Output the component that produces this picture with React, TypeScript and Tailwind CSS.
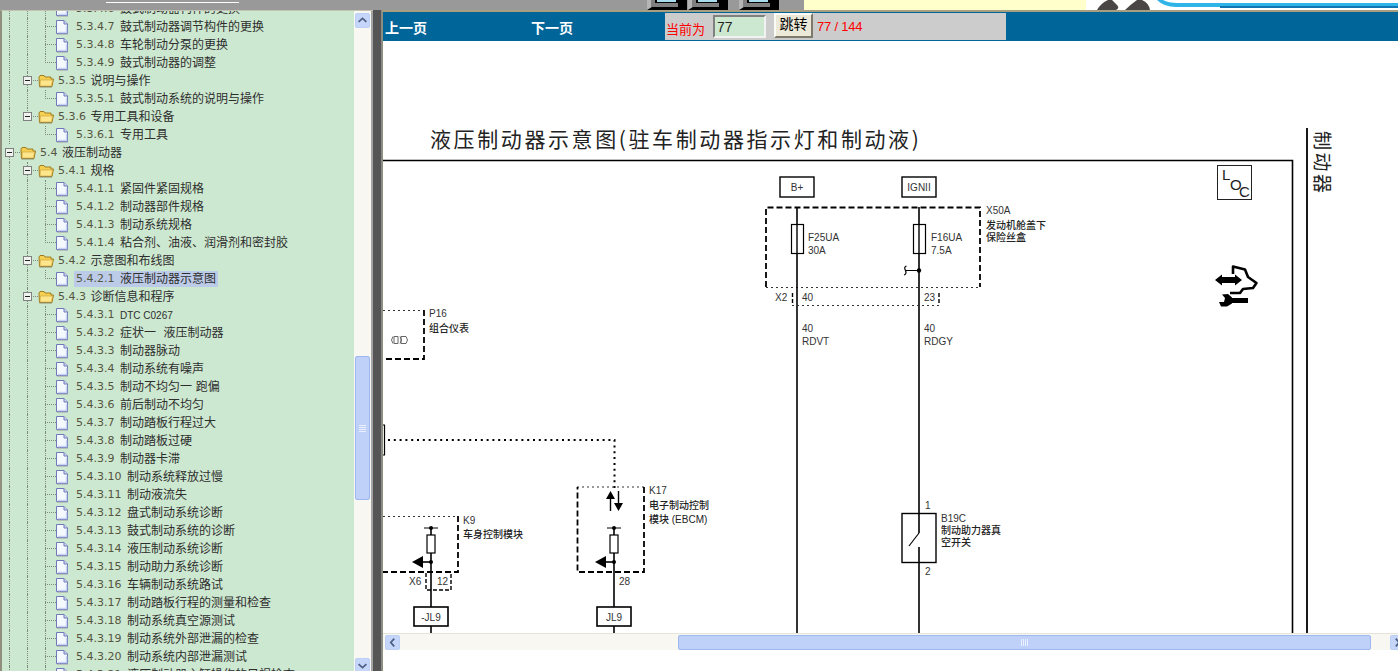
const CJK = "font-['DejaVu_Sans','Noto_Sans_CJK_SC',sans-serif]";

type Row = {
  num: string;
  label: string;
  kind: "root" | "folder" | "leaf";
  last?: boolean; // last child in its folder
  endOfBranch?: boolean; // middle guide stops here
  selected?: boolean;
  latin?: boolean;
};

const leaf = (num: string, label: string, last = false): Row => ({ num, label, kind: "leaf", last });
const folder = (num: string, label: string): Row => ({ num, label, kind: "folder" });

const ROWS: Row[] = [
  leaf("5.3.4.6", "鼓式制动器构件的更换"),
  leaf("5.3.4.7", "鼓式制动器调节构件的更换"),
  leaf("5.3.4.8", "车轮制动分泵的更换"),
  leaf("5.3.4.9", "鼓式制动器的调整", true),
  folder("5.3.5", "说明与操作"),
  leaf("5.3.5.1", "鼓式制动系统的说明与操作", true),
  { ...folder("5.3.6", "专用工具和设备"), last: true },
  { ...leaf("5.3.6.1", "专用工具", true), endOfBranch: true },
  { num: "5.4", label: "液压制动器", kind: "root" },
  folder("5.4.1", "规格"),
  leaf("5.4.1.1", "紧固件紧固规格"),
  leaf("5.4.1.2", "制动器部件规格"),
  leaf("5.4.1.3", "制动系统规格"),
  leaf("5.4.1.4", "粘合剂、油液、润滑剂和密封胶", true),
  folder("5.4.2", "示意图和布线图"),
  { ...leaf("5.4.2.1", "液压制动器示意图", true), selected: true },
  folder("5.4.3", "诊断信息和程序"),
  { ...leaf("5.4.3.1", "DTC C0267"), latin: true },
  leaf("5.4.3.2", "症状一  液压制动器"),
  leaf("5.4.3.3", "制动器脉动"),
  leaf("5.4.3.4", "制动系统有噪声"),
  leaf("5.4.3.5", "制动不均匀一 跑偏"),
  leaf("5.4.3.6", "前后制动不均匀"),
  leaf("5.4.3.7", "制动踏板行程过大"),
  leaf("5.4.3.8", "制动踏板过硬"),
  leaf("5.4.3.9", "制动器卡滞"),
  leaf("5.4.3.10", "制动系统释放过慢"),
  leaf("5.4.3.11", "制动液流失"),
  leaf("5.4.3.12", "盘式制动系统诊断"),
  leaf("5.4.3.13", "鼓式制动系统的诊断"),
  leaf("5.4.3.14", "液压制动系统诊断"),
  leaf("5.4.3.15", "制动助力系统诊断"),
  leaf("5.4.3.16", "车辆制动系统路试"),
  leaf("5.4.3.17", "制动踏板行程的测量和检查"),
  leaf("5.4.3.18", "制动系统真空源测试"),
  leaf("5.4.3.19", "制动系统外部泄漏的检查"),
  leaf("5.4.3.20", "制动系统内部泄漏测试"),
  leaf("5.4.3.21", "液压制动器主缸操作的目视检查"),
];

function Guide({ kind }: { kind: "line" | "none" | "elbow" | "tee" | "box" | "boxEnd" | "boxTop" }) {
  return (
    <span className="relative block h-full w-[18px] shrink-0">
      {(kind === "line" || kind === "tee" || kind === "box") && (
        <span className="absolute inset-y-0 left-[9px] border-l border-dotted border-[#7d8a7d]" />
      )}
      {(kind === "elbow" || kind === "boxEnd") && (
        <span className="absolute left-[9px] top-0 h-[9px] border-l border-dotted border-[#7d8a7d]" />
      )}
      {kind === "boxTop" && (
        <span className="absolute bottom-0 left-[9px] h-[9px] border-l border-dotted border-[#7d8a7d]" />
      )}
      {(kind === "elbow" || kind === "tee") && (
        <span className="absolute left-[9px] top-[8px] w-[11px] border-t border-dotted border-[#7d8a7d]" />
      )}
      {(kind === "box" || kind === "boxEnd" || kind === "boxTop") && (
        <>
          <span className="absolute left-[13px] top-[8px] w-[7px] border-t border-dotted border-[#7d8a7d]" />
          <span className="absolute left-[5px] top-[4px] flex h-[9px] w-[9px] items-center justify-center border border-[#808080] bg-[#eef3ee]">
            <span className="h-px w-[5px] bg-[#222]" />
          </span>
        </>
      )}
    </span>
  );
}

function FolderIcon() {
  return (
    <svg width="16" height="14" viewBox="0 0 16 14" className="ml-[2px] mr-[-1px] shrink-0">
      <path d="M1 3 L2 1.5 H6 L7 3 H13 V5 H15.5 L14 12.5 H1.5 Z" fill="#f5cf52" stroke="#a07c20" strokeWidth="1" />
      <path d="M2.5 6 H14.5 L13.5 12 H2 Z" fill="#fde68c" stroke="#c9a13a" strokeWidth="0.6" />
      <path d="M1.5 13 H14" stroke="#8c8c6a" strokeWidth="1" />
    </svg>
  );
}

function DocIcon() {
  return (
    <svg width="12" height="15" viewBox="0 0 12 15" className="ml-[2px] shrink-0">
      <path d="M0.5 0.5 H8 L11.5 4 V13.5 H0.5 Z" fill="#f4f8ff" stroke="#6f78b8" strokeWidth="1" />
      <path d="M8 0.5 V4 H11.5" fill="#cdd8f4" stroke="#6f78b8" strokeWidth="1" />
      <path d="M2 12.5 H10.5 V6" fill="none" stroke="#c6d3f2" strokeWidth="1.4" />
      <path d="M1 14.5 H12" stroke="#b8c0b8" strokeWidth="1" />
    </svg>
  );
}

function TreeRow({ row }: { row: Row }) {
  const cells =
    row.kind === "root" ? (
      <Guide kind="boxTop" />
    ) : row.kind === "folder" ? (
      <>
        <Guide kind="line" />
        <Guide kind={row.last ? "boxEnd" : "box"} />
      </>
    ) : (
      <>
        <Guide kind="line" />
        <Guide kind={row.endOfBranch ? "none" : "line"} />
        <Guide kind={row.last ? "elbow" : "tee"} />
      </>
    );

  return (
    <div className="flex h-[18px] items-center whitespace-pre">
      {cells}
      {row.kind === "leaf" ? <DocIcon /> : <FolderIcon />}
      <span
        className={`flex h-4 items-center px-0.5 ${row.kind === "leaf" ? "ml-1.5" : "ml-[3px]"} ${
          row.selected ? "bg-[#bccbe8]" : ""
        }`}
      >
        <span className="text-[11px] text-[#55553f]">{row.num} </span>
        <span
          className={`${row.kind === "leaf" ? "ml-0.5" : "ml-px"} ${
            row.latin ? "font-['Liberation_Sans',sans-serif] text-[10px]" : "text-xs"
          } text-[#2e2e2e]`}
        >
          {row.label}
        </span>
      </span>
    </div>
  );
}

function ScrollArrow({ dir }: { dir: "up" | "down" | "left" | "right" }) {
  const d = {
    up: "M3 9 L7.5 5 L12 9",
    down: "M3 6 L7.5 10 L12 6",
    left: "M9.5 3 L5.5 7.5 L9.5 12",
    right: "M5.5 3 L9.5 7.5 L5.5 12",
  }[dir];
  return (
    <span className="flex h-[15px] w-[15px] shrink-0 items-center justify-center rounded-[2px] border border-[#bcd0f5] bg-[#c5d6fa]">
      <svg width="15" height="15" viewBox="0 0 15 15">
        <path d={d} fill="none" stroke="#4d6185" strokeWidth="2" />
      </svg>
    </span>
  );
}

function TreePanel() {
  return (
    <aside className="flex h-full w-[373px] shrink-0 border-l-2 border-t border-[#8f8f7d] border-t-[#c4c4b4] bg-[#cde8d0]">
      <div className={`min-w-0 flex-1 overflow-hidden ${CJK}`}>
        <div className="-ml-0.5 -mt-[11px]">
          {ROWS.map((row) => (
            <TreeRow key={row.num} row={row} />
          ))}
        </div>
      </div>
      <div className="flex w-[19px] shrink-0 border-r-2 border-[#a3a3a3] bg-[#f8f7f2]">
        <div className="flex w-full flex-col items-center pt-0.5">
          <ScrollArrow dir="up" />
          <div className="mt-[328px] flex h-[144px] w-[15px] shrink-0 flex-col items-center justify-center gap-px rounded-[2px] border border-[#9db8f1] bg-[#bfd0f9]">
            <span className="h-px w-[7px] bg-[#eaf0ff]" />
            <span className="h-px w-[7px] bg-[#eaf0ff]" />
            <span className="h-px w-[7px] bg-[#eaf0ff]" />
            <span className="h-px w-[7px] bg-[#eaf0ff]" />
          </div>
          <div className="mt-[158px]">
            <ScrollArrow dir="down" />
          </div>
        </div>
      </div>
    </aside>
  );
}

function PageBar() {
  return (
    <div className="flex h-[29px] shrink-0 items-stretch bg-[#006699] py-px pl-[2px] font-['Noto_Sans_CJK_SC',sans-serif]">
      <a className="flex w-[146px] items-center text-sm font-bold text-white">上一页</a>
      <a className="flex w-[134px] items-center text-sm font-bold text-white">下一页</a>
      <div className="flex w-[341px] items-center bg-[#cccccc] pl-px">
        <span className="mt-[5px] w-[47px] text-[13px] text-[#ff0000]">当前为</span>
        <input
          readOnly
          value="77"
          className="h-[23px] w-[53px] border-2 border-[#f2f2f2] border-l-[#808080] border-t-[#808080] bg-[#cde8d0] px-0.5 font-['Liberation_Sans',sans-serif] text-sm text-[#222]"
        />
        <button className="mb-0.5 ml-2 h-[25px] w-[39px] border-2 border-[#fbfaf4] border-b-[#7d7a6b] border-r-[#7d7a6b] bg-[#ece9d8] pb-1.5 text-sm leading-none text-black">
          跳转
        </button>
        <span className="ml-1 font-['Liberation_Sans',sans-serif] text-[13px] tracking-[-0.2px] text-[#ff0000]">
          77 / 144
        </span>
      </div>
    </div>
  );
}

const LABEL = "fill-[#333] font-['Liberation_Sans','Noto_Sans_CJK_SC',sans-serif] text-[10px]";
const NOTE = "fill-[#222] font-['Liberation_Sans','Noto_Sans_CJK_SC',sans-serif] text-[10px] font-medium";
const LOC = "fill-[#222] font-['Liberation_Sans',sans-serif] text-[15px]";

function ControlModule({ x, tag }: { x: number; tag: string }) {
  return (
    <g>
      <path d={`M${x} 528 V633`} stroke="#000" strokeWidth="1.6" fill="none" />
      <path d={`M${x - 7} 528 H${x + 7}`} stroke="#000" strokeWidth="1" />
      <circle cx={x} cy="528" r="2" fill="#000" />
      <rect x={x - 4} y="535" width="8" height="18" fill="#fff" stroke="#000" strokeWidth="1.2" />
      <circle cx={x} cy="562" r="2" fill="#000" />
      <path d={`M${x - 19} 562 L${x - 8} 556 V568 Z`} fill="#000" />
      <path d={`M${x - 8} 562 H${x}`} stroke="#000" strokeWidth="1.6" />
      <rect x={x - 17} y="607" width="34" height="19" fill="#fff" stroke="#000" strokeWidth="1.6" />
      <text x={x} y="620.5" textAnchor="middle" className={LABEL}>
        {tag}
      </text>
    </g>
  );
}

function Diagram() {
  return (
    <svg viewBox="383 41 1015 592" className="block h-[592px] w-[1015px] shrink-0">
      <text
        x="430"
        y="147"
        className="fill-[#222] font-['Noto_Sans_CJK_SC',sans-serif] text-[21px]"
        letterSpacing="2.6"
      >
        液压制动器示意图(驻车制动器指示灯和制动液)
      </text>
      <path d="M383 160.5 H1292.5 V633" fill="none" stroke="#000" strokeWidth="1.6" />
      <path d="M1307 128 V633" fill="none" stroke="#000" strokeWidth="1.8" />
      <text
        transform="translate(1315 131) rotate(90)"
        className="fill-[#222] font-['Noto_Sans_CJK_SC',sans-serif] text-[19px]"
        letterSpacing="2.5"
      >
        制动器
      </text>

      {/* LOC */}
      <rect x="1217.5" y="165.5" width="34" height="34" fill="none" stroke="#222" />
      <text x="1222" y="180" className={LOC}>L</text>
      <text x="1230" y="190" className={LOC}>O</text>
      <text x="1239" y="197" className={LOC}>C</text>

      {/* service icon */}
      <path
        d="M1233 274 V266.5 L1245 269.5 L1248 277 L1256.5 283 L1253 288 L1243 289 L1240 293 H1230"
        fill="none"
        stroke="#000"
        strokeWidth="2.6"
        strokeLinejoin="round"
      />
      <path d="M1215 280 L1222 274.5 V277 H1235 V274.5 L1242 280 L1235 285.5 V283 H1222 V285.5 Z" fill="#000" />
      <path d="M1228 300.5 H1248" stroke="#000" strokeWidth="5" />
      <path d="M1222 294.5 L1228 294 L1232 297.5 V303.5 L1227 306.5 L1221 306.5 L1219 302 L1224 302 L1225 298 Z" fill="#000" />

      {/* fuse block */}
      <rect x="780" y="177" width="34" height="20" fill="#fff" stroke="#000" strokeWidth="1.4" />
      <rect x="902" y="177" width="34" height="20" fill="#fff" stroke="#000" strokeWidth="1.4" />
      <text x="797" y="191" textAnchor="middle" className={LABEL}>B+</text>
      <text x="919" y="191" textAnchor="middle" className={LABEL}>IGNII</text>
      <path d="M766 287 V207.5 H980 V287" fill="none" stroke="#000" strokeWidth="1.8" strokeDasharray="6 3" />
      <path d="M766 287.5 H980" fill="none" stroke="#333" strokeWidth="1" strokeDasharray="2 3" />
      <path d="M797 207 V633" stroke="#000" strokeWidth="1.6" />
      <path d="M919 207 V533 M919 547 V633" stroke="#000" strokeWidth="1.6" fill="none" />
      <rect x="791.5" y="224.5" width="12" height="29" fill="#fff" stroke="#000" strokeWidth="1.2" />
      <rect x="913.5" y="224.5" width="12" height="29" fill="#fff" stroke="#000" strokeWidth="1.2" />
      <path d="M797 224 V254 M919 224 V254" stroke="#000" strokeWidth="1.4" />
      <path d="M919 270.5 H906 M906.5 266 Q903.5 267 905.5 270.5 Q907 274 904 275" stroke="#000" strokeWidth="1.2" fill="none" />
      <circle cx="919" cy="270.5" r="2.2" fill="#000" />
      <text x="808" y="241" className={LABEL}>F25UA</text>
      <text x="808" y="254" className={LABEL}>30A</text>
      <text x="931" y="241" className={LABEL}>F16UA</text>
      <text x="931" y="254" className={LABEL}>7.5A</text>
      <text x="986" y="214" className={LABEL}>X50A</text>
      <text x="986" y="229" className={NOTE}>发动机舱盖下</text>
      <text x="986" y="241" className={NOTE}>保险丝盒</text>

      <text x="775" y="301" className={LABEL}>X2</text>
      <path d="M792.5 293 V305" stroke="#000" strokeWidth="1.4" strokeDasharray="4 2" />
      <path d="M792 305.5 H939" stroke="#333" strokeWidth="1" strokeDasharray="2 3" />
      <path d="M939 293 V305" stroke="#000" strokeWidth="1.4" strokeDasharray="4 2" />
      <text x="802" y="301" className={LABEL}>40</text>
      <text x="924" y="301" className={LABEL}>23</text>
      <text x="802" y="332" className={LABEL}>40</text>
      <text x="802" y="345" className={LABEL}>RDVT</text>
      <text x="924" y="332" className={LABEL}>40</text>
      <text x="924" y="345" className={LABEL}>RDGY</text>

      {/* P16 */}
      <path d="M383 310.5 H424" stroke="#333" strokeWidth="1" strokeDasharray="2 3" />
      <path d="M424 310 V359 H383" fill="none" stroke="#000" strokeWidth="1.8" strokeDasharray="6 3" />
      <text x="429" y="317" className={LABEL}>P16</text>
      <text x="429" y="332" className={NOTE}>组合仪表</text>
      <g fill="none" stroke="#666" strokeWidth="1">
        <path d="M393 336.5 Q390 340 393 343.5 M394 336.5 H398 V343.5 H394 Z" />
        <path d="M400 336.5 Q403 340 400 343.5 M401 336.5 H406 Q409 340 406 343.5 H401 Z" />
      </g>

      {/* data line */}
      <path d="M380 425 H384.5 V455 H380" fill="none" stroke="#000" strokeWidth="1.2" />
      <path d="M388 440 H614.5 V488" fill="none" stroke="#000" strokeWidth="2" strokeDasharray="2 3.8" />

      {/* K9 */}
      <path d="M383 516.5 H458" stroke="#333" strokeWidth="1" strokeDasharray="2 3" />
      <path d="M458 516 V572 H383" fill="none" stroke="#000" strokeWidth="1.8" strokeDasharray="6 3" />
      <ControlModule x={431} tag="-JL9" />
      <text x="463" y="524" className={LABEL}>K9</text>
      <text x="463" y="538" className={NOTE}>车身控制模块</text>
      <text x="409" y="585" className={LABEL}>X6</text>
      <path d="M426 573 V590 H451 V573" fill="none" stroke="#000" strokeWidth="1.4" strokeDasharray="4 2" />
      <text x="437" y="585" className={LABEL}>12</text>

      {/* K17 */}
      <path d="M577 487 H644" stroke="#333" strokeWidth="1" strokeDasharray="2 3" />
      <path d="M644 487 V572 H577.5 V487" fill="none" stroke="#000" strokeWidth="1.8" strokeDasharray="6 3" />
      <path d="M610.5 498 V511 M618.5 491 V504" stroke="#000" strokeWidth="1.4" fill="none" />
      <path d="M606 499 L610.5 491 L615 499 Z M614 503 H623 L618.5 511 Z" fill="#000" />
      <ControlModule x={614} tag="JL9" />
      <text x="649" y="494" className={LABEL}>K17</text>
      <text x="649" y="509" className={NOTE}>电子制动控制</text>
      <text x="649" y="523" className={NOTE}>模块 (EBCM)</text>
      <text x="619" y="585" className={LABEL}>28</text>

      {/* B19C */}
      <rect x="902" y="513.5" width="34" height="49" fill="none" stroke="#000" strokeWidth="1.4" />
      <path d="M919 533 L909 546" stroke="#000" strokeWidth="1.2" />
      <text x="925" y="509" className={LABEL}>1</text>
      <text x="925" y="575" className={LABEL}>2</text>
      <text x="941" y="522" className={LABEL}>B19C</text>
      <text x="941" y="534" className={NOTE}>制动助力器真</text>
      <text x="941" y="546" className={NOTE}>空开关</text>
    </svg>
  );
}

function HorizontalScrollbar() {
  return (
    <div className="flex h-[17px] shrink-0 items-center border-t border-[#e6e3d8] bg-[#f8f7f2] pl-0.5 pr-0">
      <ScrollArrow dir="left" />
      <div className="ml-[278px] flex h-[15px] w-[693px] shrink-0 items-center justify-center gap-px rounded-[2px] border border-[#9db8f1] bg-[#bfd0f9]">
        <span className="h-[7px] w-px bg-[#eaf0ff]" />
        <span className="h-[7px] w-px bg-[#eaf0ff]" />
        <span className="h-[7px] w-px bg-[#eaf0ff]" />
        <span className="h-[7px] w-px bg-[#eaf0ff]" />
      </div>
      <div className="ml-[19px]">
        <ScrollArrow dir="right" />
      </div>
    </div>
  );
}

function ToolButton() {
  return (
    <svg width="40" height="10" viewBox="0 0 40 10" className="shrink-0">
      <rect width="40" height="10" fill="#7f7f7f" />
      <path d="M0 0 H4 V10 H0 Z" fill="#b5b5b5" />
      <path d="M0 10 L5 7 H31 V0 H40 V10 Z" fill="#000" />
      <rect x="8" y="0" width="23" height="3" fill="#000" />
      <rect x="10" y="0" width="19" height="2" fill="#a8dcec" />
    </svg>
  );
}

function Banner() {
  return (
    <svg width="312" height="10" viewBox="1086 0 312 10" className="shrink-0">
      <rect x="1086" width="312" height="10" fill="#fff" />
      <path d="M1097 10 Q1101 3 1108 0 H1112 L1117 5 Q1120 8 1116 10 Z" fill="#4a4646" />
      <path d="M1125 10 Q1130 5 1137 0 H1142 Q1149 3 1150 10 Z" fill="#4a4646" />
      <path d="M1157 0 Q1164 7 1176 7 H1398 V3 H1178 Q1168 3 1163 0 Z" fill="#2fb4e8" />
      <path d="M1220 6 H1398 V8 H1220 Z" fill="#0f75b5" />
    </svg>
  );
}

export default function App() {
  return (
    <div className="flex h-[671px] w-[1398px] flex-col overflow-hidden bg-white font-['Liberation_Sans',sans-serif]">
      <header className="flex h-[10px] shrink-0 items-start overflow-hidden bg-[#999999]">
        <div className="ml-[106px] mt-0.5 h-px w-[133px] shrink-0 bg-white" />
        <div className="ml-[408px] flex shrink-0 gap-[1px]">
          <ToolButton />
          <ToolButton />
        </div>
        <div className="ml-[11px] shrink-0">
          <ToolButton />
        </div>
        <div className="ml-[25px] h-full w-[282px] shrink-0 bg-[#ffffcc]" />
        <Banner />
      </header>

      <div className="flex min-h-0 flex-1">
        <TreePanel />
        <div className="h-full w-[9px] shrink-0 border-r border-[#8a8a8a] bg-[#555555]" />
        <main className="flex min-w-0 flex-1 flex-col overflow-hidden border-l border-t-2 border-[#8f8f7d] border-t-[#a89f80]">
          <PageBar />
          <Diagram />
          <HorizontalScrollbar />
        </main>
      </div>
    </div>
  );
}
